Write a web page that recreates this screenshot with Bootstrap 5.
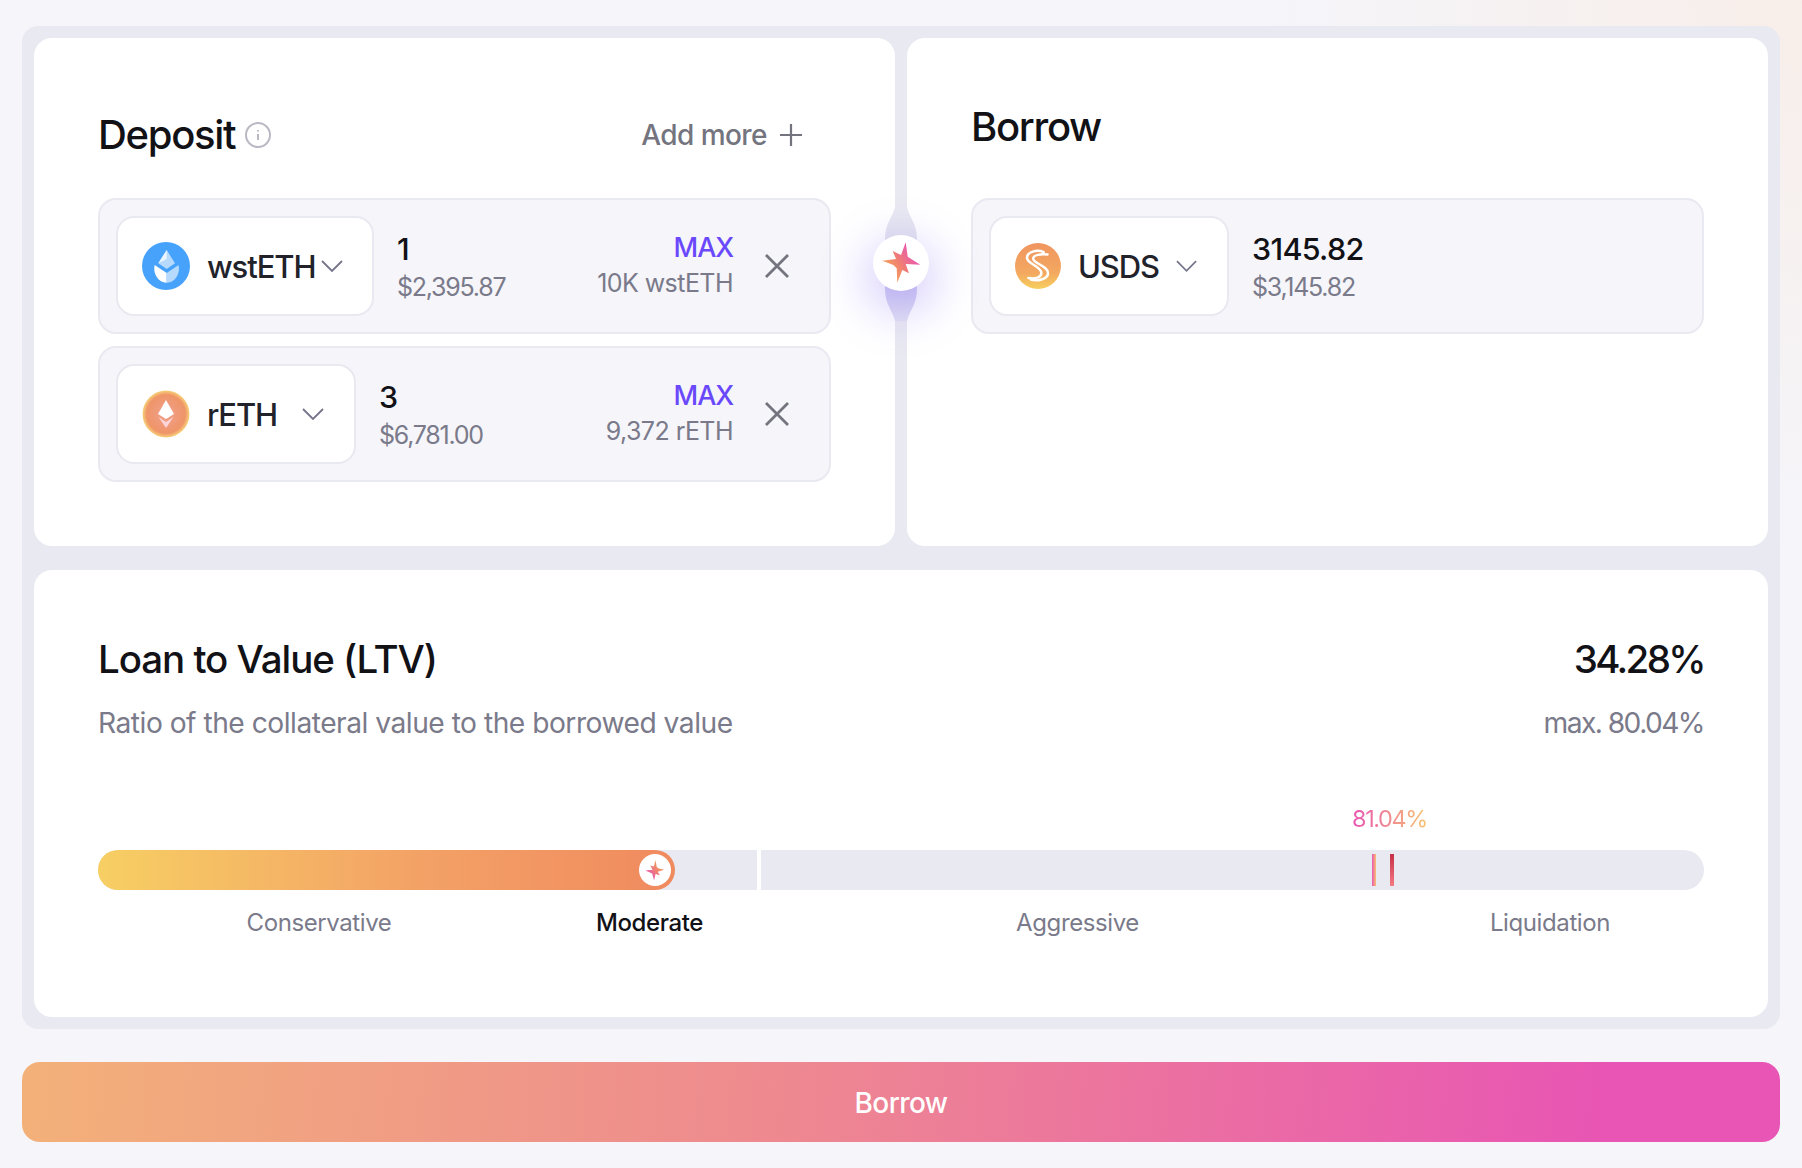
<!DOCTYPE html>
<html lang="en">
<head>
<meta charset="utf-8">
<title>Borrow</title>
<link href="https://cdn.jsdelivr.net/npm/bootstrap@5.3.0/dist/css/bootstrap.min.css" rel="stylesheet">
<style>
html,body{height:1168px;overflow:hidden}
body{font-family:"Inter","Liberation Sans",sans-serif;color:#111116;background:radial-gradient(circle 540px at 100% 0,#f8eee9 0,#f5f5fa 100%),#f5f5fa;background-color:#f5f5fa;padding:26px 22px 0}
.panel{background:#e9e9f1;border-radius:16px;padding:12px;height:1003px}
.top-row{gap:12px;height:508px;position:relative}
.pane{background:#fff;border-radius:18px;padding:0 64px;flex:1 1 0;min-width:0}
.head-a{height:54px;margin-top:70px;margin-bottom:36px}
.head-b{height:54px;margin-top:62px;margin-bottom:44px}
.title{font-size:40px;font-weight:500;letter-spacing:-1.3px;line-height:1;margin:0}
.info-gap{gap:10px}
.addmore{font-size:28px;color:#74747f;letter-spacing:-.55px;font-weight:500;margin-right:29px;gap:13px}
.asset{background:#f5f5fa;border:2px solid #e9e9f1;border-radius:18px;height:136px;padding:16px;margin-bottom:12px}
.picker{background:#fff;border:2px solid #e9e9f1;border-radius:18px;height:100px;padding:0 24px;gap:17px;flex:none}
.picker-name{font-size:31px;letter-spacing:-1.1px;font-weight:500;color:#22222a;line-height:1}
.chev-near{margin-left:-11px}
.chev-far{margin-left:auto;margin-right:6px}
.amount{font-size:30.5px;font-weight:500;line-height:1;letter-spacing:-.7px;color:#111116;margin-bottom:11px}
.usd{font-size:25px;line-height:1;color:#7a7a8a;letter-spacing:-1.25px}
.val{margin-left:23px;padding-top:2px}
.side{padding-bottom:2px}
.maxlink{font-size:27px;font-weight:500;color:#6a48fb;line-height:1;letter-spacing:-1.1px;margin-bottom:10px}
.bal{font-size:25px;line-height:1;color:#7a7a8a;letter-spacing:-.55px}
.closer{margin:0 24px 0 32px}
.sep-col{position:absolute;left:839px;top:165px;width:56px;height:122px;pointer-events:none}
.bulge{position:absolute;left:0;top:4px}
.spark{position:absolute;left:0;top:32px;width:56px;height:56px;border-radius:50%;background:#fff;box-shadow:0 14px 44px 10px rgba(120,90,245,.26)}
.ltv{background:#fff;border-radius:18px;margin-top:24px;height:447px;padding:0 64px}
.ltv-head{padding-top:63px}
.ltv-title{font-size:38.5px;font-weight:500;letter-spacing:-1.05px;line-height:52px;margin:0}
.ltv-num{font-size:38.5px;font-weight:500;letter-spacing:-2.6px;line-height:52px}
.ltv-sub{font-size:28.2px;line-height:40px;color:#7a7a8a;letter-spacing:-.5px;margin-top:18px}
.ltv-max{letter-spacing:-1.55px}
.tag-row{height:40px;margin-top:67px;position:relative}
.tag{position:absolute;left:1254px;top:-7px;font-size:23.5px;line-height:32px;letter-spacing:-1.4px;background:linear-gradient(90deg,#e855b4,#f8c36f);-webkit-background-clip:text;background-clip:text;color:transparent}
.track{height:40px;border-radius:20px;overflow:hidden;position:relative;gap:4px;background:#fff}
.seg{background:#e9e9f1;height:40px}
.fill{position:absolute;left:0;top:0;height:40px;border-radius:0 20px 20px 0;background:linear-gradient(90deg,#f7cf63,#f3a266 55%,#f08a5f)}
.thumb{position:absolute;right:4px;top:4px;width:32px;height:32px;border-radius:50%;background:#fff}
.tick{position:absolute;top:4px;width:4px;height:32px}
.tick-a{background:linear-gradient(90deg,#e855b4,#f8c36f)}
.tick-b{background:linear-gradient(180deg,#c62f45,#f47a83)}
.zone{text-align:center;font-size:24px;line-height:32px;color:#7a7a8a;letter-spacing:-.4px;margin-top:17px}
.zone-on{color:#111116;font-weight:500}
.go{display:block;width:100%;height:80px;margin-top:33px;padding-top:8px;border:0;border-radius:18px;background:linear-gradient(95deg,#f3b179 0,#ee8a8f 42%,#e855b4 90%);color:#fff;font-size:28px;font-weight:500;letter-spacing:-.6px}
.go:hover{color:#fff}
</style>
</head>
<body>
<svg width="0" height="0" class="position-absolute">
<defs>
<linearGradient id="sg" x1="0.1" y1="0.9" x2="0.9" y2="0.35"><stop offset="0" stop-color="#f7b25a"/><stop offset=".5" stop-color="#f0826f"/><stop offset="1" stop-color="#e855b4"/></linearGradient>
<linearGradient id="ug" x1="0.5" y1="0" x2="0.5" y2="1"><stop offset="0" stop-color="#f09560"/><stop offset=".65" stop-color="#f3a860"/><stop offset="1" stop-color="#f7cf5e"/></linearGradient>
<radialGradient id="rg"><stop offset="0" stop-color="#f0a08e"/><stop offset=".82" stop-color="#ef9568"/><stop offset="1" stop-color="#f8d27a"/></radialGradient>
<linearGradient id="bu" x1="0" y1="0" x2="0" y2="1"><stop offset="0" stop-color="#e9e9f1"/><stop offset=".45" stop-color="#e0e0ee"/><stop offset=".7" stop-color="#d2cef2"/><stop offset="1" stop-color="#e3e2f3"/></linearGradient>
</defs>
</svg>
<main class="panel">
  <div class="d-flex top-row">
    <section class="pane">
      <div class="head-a d-flex align-items-center justify-content-between">
        <div class="d-flex align-items-center info-gap">
          <h2 class="title">Deposit</h2>
          <svg width="26" height="26" viewBox="0 0 26 26" fill="none" stroke="#b9b9c5" stroke-width="2"><circle cx="13" cy="13" r="12"/><path d="M13 12v6M13 8v1.6"/></svg>
        </div>
        <div class="addmore d-flex align-items-center">Add more
          <svg width="22" height="22" viewBox="0 0 22 22" stroke="#74747f" stroke-width="2.2"><path d="M11 0v22M0 11h22"/></svg>
        </div>
      </div>

      <div class="asset d-flex align-items-center">
        <div class="picker d-flex align-items-center" style="width:258px">
          <svg width="48" height="48" viewBox="0 0 48 48"><circle cx="24" cy="24" r="24" fill="#47a2fb"/><path d="M24.7 8 33 21.3 24.7 27 16.3 21.3Z" fill="#b5dafd"/><path d="M24.7 8 16.3 21.3 24.7 17Z" fill="#eaf5ff"/><path d="M12.6 23 24.7 31V40.7C17 41 10.5 32 12.6 23Z" fill="#fff"/><path d="M36.6 23 24.7 31V40.7C32.5 41 38.6 32 36.6 23Z" fill="#b5dafd"/></svg>
          <span class="picker-name">wstETH</span>
          <svg width="22" height="12" viewBox="0 0 22 12" fill="none" stroke="#74748a" stroke-width="1.8" class="chev-near"><path d="M1 1l10 10L21 1"/></svg>
        </div>
        <div class="val">
          <div class="amount">1</div>
          <div class="usd">$2,395.87</div>
        </div>
        <div class="ms-auto text-end side">
          <div class="maxlink">MAX</div>
          <div class="bal">10K wstETH</div>
        </div>
        <svg width="24" height="24" viewBox="0 0 24 24" stroke="#74747f" stroke-width="2.8" class="closer"><path d="M1 1l22 22M23 1 1 23"/></svg>
      </div>

      <div class="asset d-flex align-items-center">
        <div class="picker d-flex align-items-center" style="width:240px">
          <svg width="48" height="48" viewBox="0 0 48 48"><circle cx="24" cy="24" r="23.5" fill="url(#rg)"/><path d="M24 10 32 24 24 29 16 24Z" fill="#fff"/><path d="M16.5 27 24 32 31.5 27 24 38Z" fill="#fbd5d8"/></svg>
          <span class="picker-name">rETH</span>
          <svg width="22" height="12" viewBox="0 0 22 12" fill="none" stroke="#74748a" stroke-width="1.8" class="chev-far"><path d="M1 1l10 10L21 1"/></svg>
        </div>
        <div class="val">
          <div class="amount">3</div>
          <div class="usd">$6,781.00</div>
        </div>
        <div class="ms-auto text-end side">
          <div class="maxlink">MAX</div>
          <div class="bal">9,372 rETH</div>
        </div>
        <svg width="24" height="24" viewBox="0 0 24 24" stroke="#74747f" stroke-width="2.8" class="closer"><path d="M1 1l22 22M23 1 1 23"/></svg>
      </div>
    </section>

    <section class="pane">
      <div class="head-b d-flex align-items-center">
        <h2 class="title">Borrow</h2>
      </div>
      <div class="asset d-flex align-items-center">
        <div class="picker d-flex align-items-center" style="width:240px">
          <svg width="48" height="48" viewBox="0 0 48 48"><circle cx="24" cy="24" r="24" fill="url(#ug)"/><g fill="none" stroke="#fff" stroke-width="2.6" stroke-linecap="round"><path d="M30 9.5C23 6.5 12.5 9 12.5 15.5C12.5 22 27 24 27.5 31C27.8 36 21 38 14 36.5"/><path d="M34 12C27 11.5 19 12 19 16.5C19 21.5 34.5 23.5 34.5 31.5C34.5 37.5 24 40 17 38.5"/></g></svg>
          <span class="picker-name">USDS</span>
          <svg width="22" height="12" viewBox="0 0 22 12" fill="none" stroke="#74748a" stroke-width="1.8" class="chev-far"><path d="M1 1l10 10L21 1"/></svg>
        </div>
        <div class="val">
          <div class="amount">3145.82</div>
          <div class="usd">$3,145.82</div>
        </div>
      </div>
    </section>

    <div class="sep-col">
      <svg class="bulge" width="56" height="114" viewBox="0 0 56 114"><path d="M22 0h12c2 10 10 16 10 32v50c0 16-8 22-10 32H22c-2-10-10-16-10-32V32C12 16 20 10 22 0Z" fill="url(#bu)"/></svg>
      <div class="spark d-flex align-items-center justify-content-center">
        <svg width="56" height="56" viewBox="0 0 56 56"><path d="M32.7 7.3 34.7 21.7 47.3 29.7 32.7 29 36 38.3 29.3 35 24.3 47.7 23.7 33.3 20.3 30 9.3 25.7 23 24 19.7 16 28 20Z" fill="url(#sg)"/></svg>
      </div>
    </div>
  </div>

  <section class="ltv">
    <div class="ltv-head">
      <div class="d-flex justify-content-between align-items-center">
        <h2 class="ltv-title">Loan to Value (LTV)</h2>
        <div class="ltv-num">34.28%</div>
      </div>
      <div class="d-flex justify-content-between ltv-sub">
        <div>Ratio of the collateral value to the borrowed value</div>
        <div class="ltv-max">max. 80.04%</div>
      </div>
    </div>
    <div class="tag-row"><span class="tag">81.04%</span></div>
    <div class="track d-flex">
      <div class="seg" style="width:659px"></div>
      <div class="seg flex-fill"></div>
      <div class="fill" style="width:577px">
        <div class="thumb d-flex align-items-center justify-content-center">
          <svg width="28" height="28" viewBox="0 0 56 56"><g transform="rotate(172 28 28)"><path d="M32.7 7.3 34.7 21.7 47.3 29.7 32.7 29 36 38.3 29.3 35 24.3 47.7 23.7 33.3 20.3 30 9.3 25.7 23 24 19.7 16 28 20Z" fill="url(#sg)"/></g></svg>
        </div>
      </div>
      <div class="tick tick-a" style="left:1274px"></div>
      <div class="tick tick-b" style="left:1292px"></div>
    </div>
    <div class="d-flex">
      <div class="zone" style="width:442px">Conservative</div>
      <div class="zone zone-on" style="width:219px">Moderate</div>
      <div class="zone" style="width:637px">Aggressive</div>
      <div class="zone" style="width:308px">Liquidation</div>
    </div>
  </section>
</main>
<button type="button" class="btn go">Borrow</button>
<script src="https://cdn.jsdelivr.net/npm/bootstrap@5.3.0/dist/js/bootstrap.bundle.min.js"></script>
</body>
</html>
